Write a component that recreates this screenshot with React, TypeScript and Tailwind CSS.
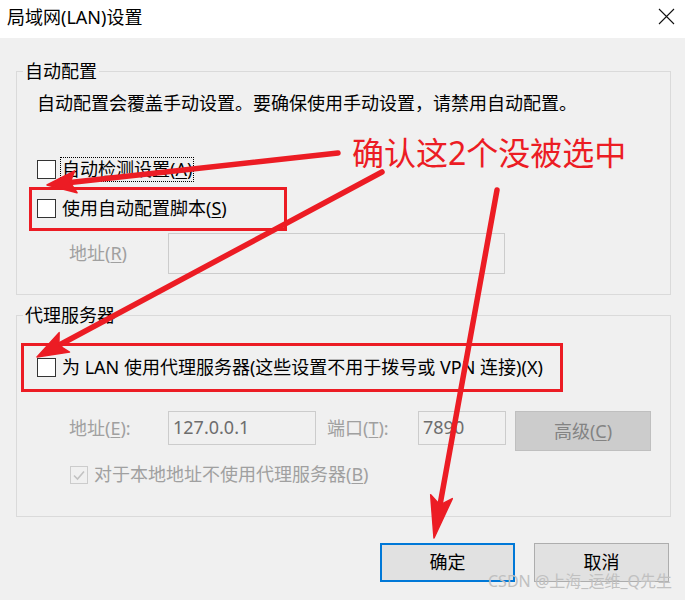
const RED = "#ec1c24";

function Box() {
  return <span className="block w-[19px] h-[19px] shrink-0 border border-[#333333] bg-white" />;
}

function Arrow({ tail, tip, len, half }: { tail: [number, number]; tip: [number, number]; len: number; half: number }) {
  const dx = tip[0] - tail[0];
  const dy = tip[1] - tail[1];
  const d = Math.hypot(dx, dy);
  const ux = dx / d;
  const uy = dy / d;
  const bx = tip[0] - ux * len;
  const by = tip[1] - uy * len;
  const nx = tip[0] - ux * (len * 0.8);
  const ny = tip[1] - uy * (len * 0.8);
  const pts = [
    [tip[0], tip[1]],
    [bx - uy * half, by + ux * half],
    [nx, ny],
    [bx + uy * half, by - ux * half],
  ]
    .map((p) => p.join(","))
    .join(" ");
  return (
    <g>
      <line x1={tail[0]} y1={tail[1]} x2={nx} y2={ny} stroke={RED} strokeWidth={5.5} strokeLinecap="round" />
      <polygon points={pts} fill={RED} stroke={RED} strokeWidth={1.5} strokeLinejoin="round" />
    </g>
  );
}

export default function App() {
  return (
    <div className="relative w-[685px] h-[600px] overflow-hidden bg-[#f0f0f0] text-[18px] text-black font-['Noto_Sans','Noto_Sans_CJK_SC',sans-serif]">
      {/* title bar */}
      <div className="h-[38px] bg-white flex items-center justify-between pl-[7px] pr-[10px]">
        <span className="leading-[24px] -mt-[5px]">局域网(LAN)设置</span>
        <svg width="17" height="17" viewBox="0 0 17 17" className="-mt-[6px]">
          <path d="M1 1 L16 16 M16 1 L1 16" stroke="#111" strokeWidth="1.1" fill="none" />
        </svg>
      </div>

      <div className="pl-[16px]">
        {/* 自动配置 */}
        <fieldset className="mt-[24px] w-[655px] border border-[#dadada]">
          <legend className="ml-[6px] px-[2px] leading-[18px]">自动配置</legend>
          <p className="mt-[11px] ml-[20px] leading-[24px]">自动配置会覆盖手动设置。要确保使用手动设置，请禁用自动配置。</p>
          <div className="mt-[42px] ml-[20px] flex items-center h-[25px]">
            <Box />
            <span className="ml-[4px] h-[25px] px-[1px] border border-dotted border-black leading-[23px]">
              自动检测设置(<u className="underline-offset-2">A</u>)
            </span>
          </div>
          <div className="mt-[14px] ml-[20px] flex items-center h-[25px]">
            <Box />
            <span className="ml-[6px] leading-[25px]">
              使用自动配置脚本(<u className="underline-offset-2">S</u>)
            </span>
          </div>
          <div className="mt-[12px] mb-[20px] ml-[52px] flex items-center">
            <span className="w-[99px] text-[#a0a0a0] leading-[41px]">
              地址(<u className="underline-offset-2">R</u>)
            </span>
            <span className="w-[337px] h-[41px] border border-[#cccccc]" />
          </div>
        </fieldset>

        {/* 代理服务器 */}
        <fieldset className="mt-[11px] w-[655px] border border-[#dadada]">
          <legend className="ml-[6px] px-[2px] leading-[18px]">代理服务器</legend>
          <div className="mt-[31px] ml-[20px] flex items-center h-[25px]">
            <Box />
            <span className="ml-[6px] leading-[25px]">为 LAN 使用代理服务器(这些设置不用于拨号或 VPN 连接)(X)</span>
          </div>
          <div className="mt-[31px] ml-[52px] flex items-start">
            <span className="w-[99px] text-[#a0a0a0] leading-[34px]">
              地址(<u className="underline-offset-2">E</u>):
            </span>
            <span className="w-[148px] h-[34px] border border-[#cccccc] pl-[4px] leading-[30px] text-[#6d6d6d]">127.0.0.1</span>
            <span className="ml-[11px] w-[91px] text-[#a0a0a0] leading-[34px]">
              端口(<u className="underline-offset-2">T</u>):
            </span>
            <span className="w-[88px] h-[34px] border border-[#cccccc] pl-[4px] leading-[30px] text-[#6d6d6d]">7890</span>
            <span className="ml-[9px] w-[136px] h-[40px] bg-[#cccccc] border border-[#bfbfbf] text-[#838383] flex items-center justify-center">
              高级(<u className="underline-offset-2">C</u>)
            </span>
          </div>
          <div className="mt-[11px] mb-[29px] ml-[53px] flex items-center h-[25px]">
            <span className="relative block w-[18px] h-[18px] border border-[#cccccc] bg-[#f0f0f0]">
              <svg width="16" height="16" viewBox="0 0 16 16" className="absolute left-0 top-0">
                <path d="M3 8.5 L6.5 12 L13 4.5" stroke="#c2c2c2" strokeWidth="1.6" fill="none" />
              </svg>
            </span>
            <span className="ml-[6px] text-[#a0a0a0] leading-[25px]">
              对于本地地址不使用代理服务器(<u className="underline-offset-2">B</u>)
            </span>
          </div>
        </fieldset>
      </div>

      {/* buttons */}
      <div className="mt-[26px] pr-[16px] flex justify-end gap-[19px]">
        <button className="w-[135px] h-[39px] bg-[#e1e1e1] border-2 border-[#0078d7] leading-[35px]">确定</button>
        <button className="w-[135px] h-[39px] bg-[#e1e1e1] border border-[#adadad] leading-[37px]">取消</button>
      </div>

      {/* annotations */}
      <div className="absolute left-[29px] top-[187px] w-[258px] h-[44px] border-[3px] border-[#ec1c24]" />
      <div className="absolute left-[21px] top-[343px] w-[542px] h-[49px] border-[3px] border-[#ec1c24]" />
      <div className="absolute left-[352px] top-[136px] text-[32px] leading-[34px] text-[#ec1c24] whitespace-nowrap">
        确认这2个没被选中
      </div>
      <svg className="absolute left-0 top-0 pointer-events-none" width="685" height="600">
        <Arrow tail={[338, 153]} tip={[47, 185]} len={29} half={11} />
        <Arrow tail={[382, 172]} tip={[37, 357]} len={31} half={11} />
        <Arrow tail={[497, 190]} tip={[434, 538]} len={42} half={11} />
      </svg>
      <div className="absolute left-[488px] top-[570px] text-[16px] leading-[22px] text-[#c0c0c0] whitespace-nowrap">
        CSDN @上海_运维_Q先生
      </div>
    </div>
  );
}
